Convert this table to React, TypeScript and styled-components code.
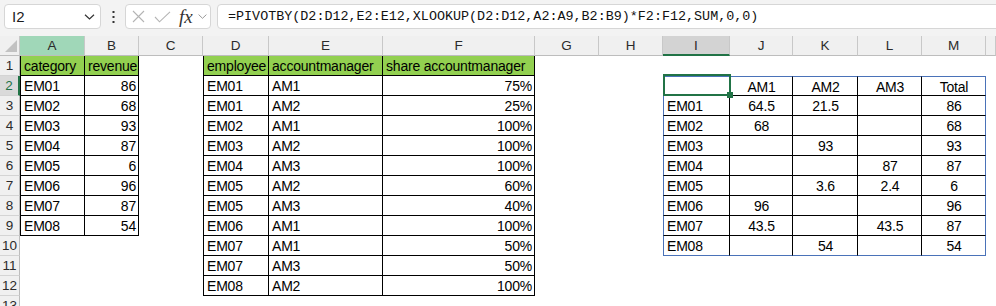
import React from 'react'
import styled, { createGlobalStyle, css } from 'styled-components'

const BLACK = '#000'
const SPILL = '#4a72b8'
const EXCEL_GREEN = '#217346'
const HEADER_FILL = '#92d050'

// the last column is only a sliver of N, so its letter is left out
const COLUMN_WIDTHS = [65, 54, 64, 66, 114, 152, 64, 64, 67, 63, 65, 64, 64, 10]
const LETTERS = 'ABCDEFGHIJKLM'.split('').concat('')
const ROW_COUNT = 13
const ACTIVE_ROW = 2
const ACTIVE_COL = 8 // I

const FORMULA = '=PIVOTBY(D2:D12,E2:E12,XLOOKUP(D2:D12,A2:A9,B2:B9)*F2:F12,SUM,0,0)'

type Align = 'left' | 'right' | 'center'

interface ICellSpec {
  text?: string
  align?: Align
  fill?: string
  bt?: string
  br?: string
  bb?: string
  bl?: string
}

interface ITableOptions {
  headerFill?: string
  edge: string
  topEdge?: boolean
  align: (row: number, col: number, text: string) => Align
}

const isNumeric = (text: string) => /^[\d.]+%?$/.test(text)

const sheet: ICellSpec[][] = Array.from({ length: ROW_COUNT + 1 }, () =>
  Array.from({ length: LETTERS.length }, () => ({})),
)

const placeTable = (top: number, left: number, rows: string[][], opts: ITableOptions) => {
  rows.forEach((cells, i) =>
    cells.forEach((text, j) => {
      sheet[top + i][left + j] = {
        text,
        align: opts.align(i, j, text),
        fill: i === 0 ? opts.headerFill : undefined,
        bt: i === 0 && opts.topEdge ? opts.edge : undefined,
        bl: j === 0 ? opts.edge : undefined,
        br: j === cells.length - 1 ? opts.edge : BLACK,
        bb: i === rows.length - 1 ? opts.edge : BLACK,
      }
    }),
  )
}

const sourceAlign = (_row: number, _col: number, text: string): Align =>
  isNumeric(text) ? 'right' : 'left'

placeTable(
  1,
  0,
  [
    [`category`, `revenue`],
    [`EM01`, `86`],
    [`EM02`, `68`],
    [`EM03`, `93`],
    [`EM04`, `87`],
    [`EM05`, `6`],
    [`EM06`, `96`],
    [`EM07`, `87`],
    [`EM08`, `54`],
  ],
  { headerFill: HEADER_FILL, edge: BLACK, align: sourceAlign },
)

placeTable(
  1,
  3,
  [
    [`employee`, `accountmanager`, `share accountmanager`],
    [`EM01`, `AM1`, `75%`],
    [`EM01`, `AM2`, `25%`],
    [`EM02`, `AM1`, `100%`],
    [`EM03`, `AM2`, `100%`],
    [`EM04`, `AM3`, `100%`],
    [`EM05`, `AM2`, `60%`],
    [`EM05`, `AM3`, `40%`],
    [`EM06`, `AM1`, `100%`],
    [`EM07`, `AM1`, `50%`],
    [`EM07`, `AM3`, `50%`],
    [`EM08`, `AM2`, `100%`],
  ],
  { headerFill: HEADER_FILL, edge: BLACK, align: sourceAlign },
)

placeTable(
  2,
  8,
  [
    [``, `AM1`, `AM2`, `AM3`, `Total`],
    [`EM01`, `64.5`, `21.5`, ``, `86`],
    [`EM02`, `68`, ``, ``, `68`],
    [`EM03`, ``, `93`, ``, `93`],
    [`EM04`, ``, ``, `87`, `87`],
    [`EM05`, ``, `3.6`, `2.4`, `6`],
    [`EM06`, `96`, ``, ``, `96`],
    [`EM07`, `43.5`, ``, `43.5`, `87`],
    [`EM08`, ``, `54`, ``, `54`],
  ],
  { edge: SPILL, topEdge: true, align: (_r, col) => (col === 0 ? 'left' : 'center') },
)

const GlobalStyle = createGlobalStyle`
  html, body {
    margin: 0;
    padding: 0;
    background: #ffffff;
    overflow: hidden;
  }
  body {
    font-family: "Liberation Sans", Arial, sans-serif;
  }
`

export default function App() {
  return (
    <>
      <GlobalStyle />
      <Window>
        <Toolbar>
          <NameBox>
            <span>I2</span>
            <svg width="11" height="6" viewBox="0 0 11 6">
              <path d="M1 0.8 L5.5 5 L10 0.8" fill="none" stroke="#333" strokeWidth="1.2" />
            </svg>
          </NameBox>
          <Dots>
            <svg width="3" height="12" viewBox="0 0 3 12">
              <rect x="0.5" y="0" width="2" height="2" fill="#333" />
              <rect x="0.5" y="5" width="2" height="2" fill="#333" />
              <rect x="0.5" y="10" width="2" height="2" fill="#333" />
            </svg>
          </Dots>
          <FuncBox>
            <svg width="13" height="13" viewBox="0 0 13 13">
              <path d="M1 1 L12 12 M12 1 L1 12" stroke="#b4b4b4" strokeWidth="1.1" />
            </svg>
            <svg width="17" height="12" viewBox="0 0 17 12">
              <path d="M1 6 L5.5 10.8 L16 0.8" fill="none" stroke="#b4b4b4" strokeWidth="1.1" />
            </svg>
            <Fx>fx</Fx>
            <svg width="9" height="5" viewBox="0 0 9 5">
              <path d="M0.6 0.6 L4.5 4.3 L8.4 0.6" fill="none" stroke="#9a9a9a" strokeWidth="1" />
            </svg>
          </FuncBox>
          <FormulaBox>{FORMULA}</FormulaBox>
        </Toolbar>
        <Sheet>
          <Corner>
            <svg width="12" height="12" viewBox="0 0 12 12">
              <polygon points="12,0 12,12 0,12" fill="#c2c2c2" />
            </svg>
          </Corner>
          {LETTERS.map((letter, c) => (
            <ColHeader
              key={c}
              $state={c === ACTIVE_COL ? 'active' : c === 0 ? 'highlight' : 'normal'}
            >
              {letter}
            </ColHeader>
          ))}
          {Array.from({ length: ROW_COUNT }, (_, i) => i + 1).map((row) => (
            <React.Fragment key={row}>
              <RowHeader $active={row === ACTIVE_ROW}>{row}</RowHeader>
              {LETTERS.map((_, c) => {
                const spec = sheet[row][c]
                return (
                  <Cell
                    key={c}
                    $align={spec.align ?? 'left'}
                    $fill={spec.fill}
                    $bt={spec.bt}
                    $br={spec.br}
                    $bb={spec.bb}
                    $bl={spec.bl}
                  >
                    {spec.text}
                    {row === ACTIVE_ROW && c === ACTIVE_COL && <Selection />}
                  </Cell>
                )
              })}
            </React.Fragment>
          ))}
        </Sheet>
      </Window>
    </>
  )
}

const Window = styled.div`
  width: 996px;
  height: 306px;
  overflow: hidden;
  background: #ffffff;
`

const Toolbar = styled.div`
  box-sizing: border-box;
  display: flex;
  align-items: flex-start;
  height: 36px;
  padding: 4px 0 0 4px;
  background: #f3f3f3;
`

const boxStyle = css`
  box-sizing: border-box;
  display: flex;
  align-items: center;
  height: 25px;
  background: #ffffff;
  border: 1px solid #d6d6d6;
  border-radius: 4px;
`

const NameBox = styled.div`
  ${boxStyle}
  justify-content: space-between;
  width: 97px;
  padding: 0 5px 0 7px;
  font-size: 15px;
  color: #1b1b1b;
`

const Dots = styled.div`
  display: flex;
  align-items: center;
  justify-content: center;
  width: 24px;
  height: 25px;
`

const FuncBox = styled.div`
  ${boxStyle}
  width: 86px;
  padding: 0 0 0 6px;

  & > svg:nth-child(2) {
    margin-left: 9px;
  }
`

const Fx = styled.span`
  margin-left: 8px;
  margin-right: 5px;
  font-family: "Liberation Serif", "Times New Roman", serif;
  font-style: italic;
  font-size: 19px;
  line-height: 20px;
  color: #333;
`

const FormulaBox = styled.div`
  ${boxStyle}
  flex: 1;
  margin-left: 6px;
  margin-right: -8px;
  padding-left: 10px;
  font-family: "Liberation Mono", "Courier New", monospace;
  font-size: 13.4px;
  color: #111;
  white-space: nowrap;
`

const Sheet = styled.div`
  display: grid;
  grid-template-columns: 20px ${COLUMN_WIDTHS.map((w) => `${w}px`).join(' ')};
  grid-auto-rows: 20px;
`

const headerText = css`
  box-sizing: border-box;
  display: flex;
  align-items: center;
  justify-content: center;
  font-family: "Liberation Sans", Arial, sans-serif;
  font-size: 13.5px;
  color: #2b2b2b;
`

const Corner = styled.div`
  box-sizing: border-box;
  display: flex;
  align-items: flex-end;
  justify-content: flex-end;
  padding: 0 2px 3px 0;
  background: #f0f0f0;
  border-right: 1px solid #c8c8c8;
  border-bottom: 1px solid #bdbdbd;
`

type HeaderState = 'normal' | 'highlight' | 'active'

const colHeaderFill: Record<HeaderState, string> = {
  normal: '#f0f0f0',
  highlight: '#a0d7b8',
  active: '#d3d3d3',
}

const ColHeader = styled.div<{ $state: HeaderState }>`
  ${headerText}
  background: ${({ $state }) => colHeaderFill[$state]};
  border-right: 1px solid #c8c8c8;
  border-bottom: ${({ $state }) =>
    $state === 'active' ? `2px solid ${EXCEL_GREEN}` : '1px solid #bdbdbd'};
`

const RowHeader = styled.div<{ $active: boolean }>`
  ${headerText}
  background: ${({ $active }) => ($active ? '#dadada' : '#f0f0f0')};
  color: ${({ $active }) => ($active ? EXCEL_GREEN : '#2b2b2b')};
  border-bottom: 1px solid #d4d4d4;
  border-right: ${({ $active }) =>
    $active ? `2px solid ${EXCEL_GREEN}` : '1px solid #bdbdbd'};
`

const justify: Record<Align, string> = {
  left: 'flex-start',
  right: 'flex-end',
  center: 'center',
}

const edge = (color?: string) => (color ? `1px solid ${color}` : 'none')

interface ICellProps {
  $align: Align
  $fill?: string
  $bt?: string
  $br?: string
  $bb?: string
  $bl?: string
}

const Cell = styled.div<ICellProps>`
  position: relative;
  box-sizing: border-box;
  display: flex;
  align-items: center;
  justify-content: ${({ $align }) => justify[$align]};
  padding: 1px 2px 0 3px;
  font-family: "Liberation Sans", Arial, sans-serif;
  font-size: 14px;
  letter-spacing: -0.2px;
  line-height: 18px;
  color: #000;
  white-space: nowrap;
  background: ${({ $fill }) => $fill ?? '#ffffff'};
  border-top: ${({ $bt }) => edge($bt)};
  border-right: ${({ $br }) => edge($br)};
  border-bottom: ${({ $bb }) => edge($bb)};
  border-left: ${({ $bl }) => edge($bl)};
`

const Selection = styled.span`
  position: absolute;
  z-index: 2;
  top: -3px;
  left: -1px;
  right: -2px;
  bottom: -1px;
  border: 2px solid ${EXCEL_GREEN};
  pointer-events: none;

  &::after {
    content: '';
    position: absolute;
    right: -4px;
    bottom: -4px;
    width: 6px;
    height: 6px;
    background: ${EXCEL_GREEN};
  }
`
